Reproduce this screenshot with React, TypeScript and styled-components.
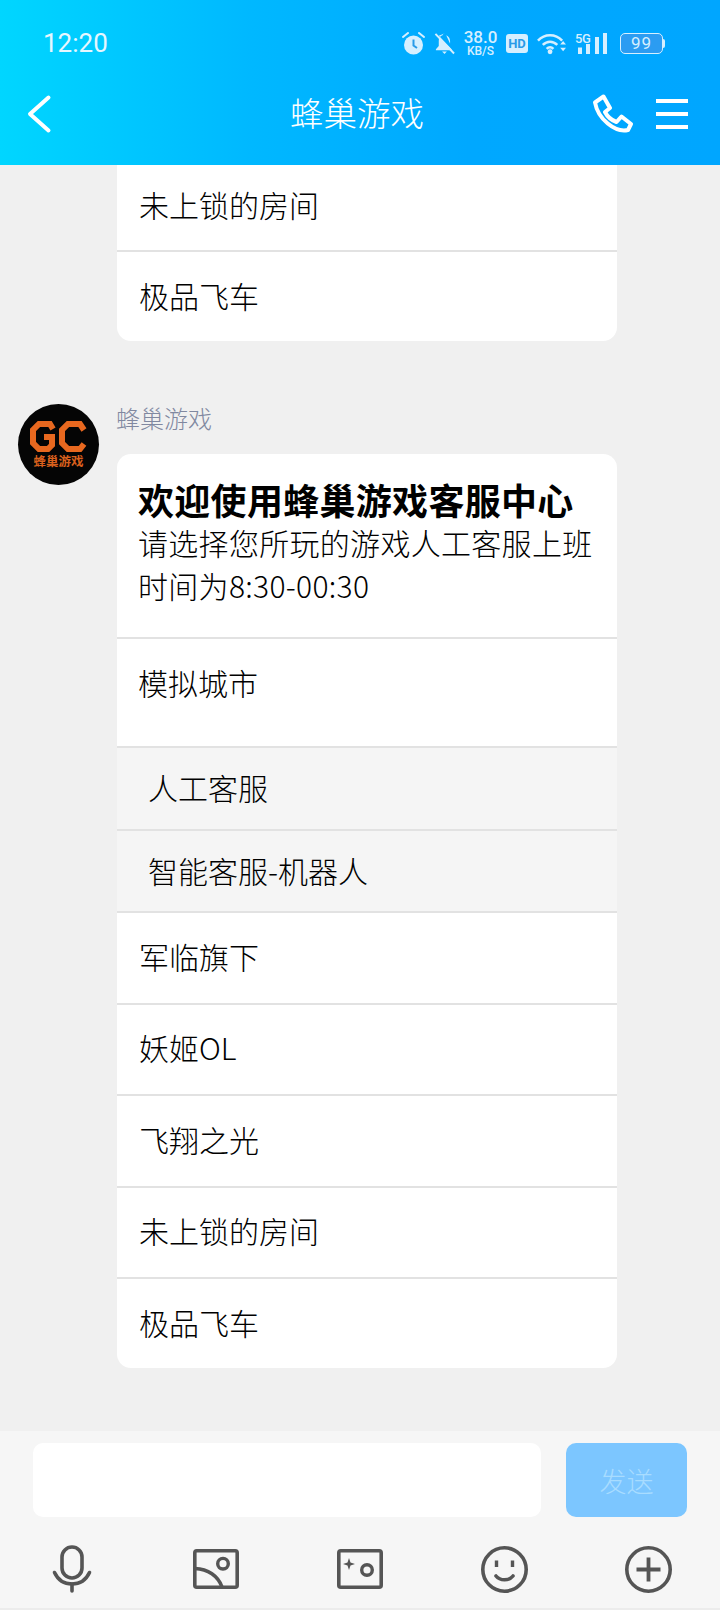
import React from 'react';
import styled, { createGlobalStyle } from 'styled-components';

const CJK = `'Noto Sans CJK SC', 'Noto Sans', sans-serif`;

const GlobalStyle = createGlobalStyle`
  html, body {
    margin: 0;
    padding: 0;
    background: #f0f0f0;
  }
  * {
    box-sizing: border-box;
  }
`;

function AlarmIcon() {
  return (
    <StatusSvg width="23" height="23" viewBox="0 0 23 23">
      <circle cx="11.5" cy="13" r="9.5" fill="#d6efff" />
      <path d="M11.5 7.5v6l3.5 2.5" fill="none" stroke="#2a9be8" strokeWidth="2" />
      <path d="M1 5l5-4M22 5l-5-4" stroke="#d6efff" strokeWidth="2" strokeLinecap="round" />
    </StatusSvg>
  );
}

function BellOffIcon() {
  return (
    <StatusSvg width="21" height="23" viewBox="0 0 22 23">
      <path d="M11 1c-1 0-1.700.7-1.700 1.700C6 3.700 5 6.300 5 9v5l-3 3.500v1h17l-1-1.500L5 3.500z" fill="#d6efff" />
      <path d="M16.800 11.500V9c0-3-1.500-5-4-6.200z" fill="#d6efff" />
      <path d="M8.500 20h5l-2.500 2.500z" fill="#d6efff" />
      <path d="M1.500 1.500L21 22" stroke="#d6efff" strokeWidth="2" />
    </StatusSvg>
  );
}

function WifiIcon() {
  return (
    <StatusSvg width="29" height="23" viewBox="0 0 30 23">
      <path d="M1 8.500C8 1 19 1 26 8.500" fill="none" stroke="#d6efff" strokeWidth="2.600" />
      <path d="M6 13c4.500-4.500 10.500-4.500 15 0" fill="none" stroke="#d6efff" strokeWidth="2.600" />
      <path d="M10 17c2-2 5-2 7 0" fill="none" stroke="#d6efff" strokeWidth="2.600" />
      <circle cx="13.500" cy="20" r="2.500" fill="#d6efff" />
      <path d="M24 12.500h6l-3-3.500zM24 16h6l-3 3.500z" fill="#d6efff" />
    </StatusSvg>
  );
}

function SignalIcon() {
  return (
    <SignalWrap>
      <SignalLabel>5G</SignalLabel>
      <svg width="33" height="21" viewBox="0 0 33 21">
        <rect x="3" y="14.500" width="4" height="6.500" fill="#d6efff" />
        <rect x="11" y="11" width="4" height="10" fill="#d6efff" />
        <rect x="20" y="4" width="4" height="17" fill="#d6efff" />
        <rect x="28" y="0" width="4" height="21" fill="#d6efff" />
      </svg>
    </SignalWrap>
  );
}

function PhoneIcon() {
  return (
    <svg width="41" height="40" viewBox="0 0 41 40">
      <path
        d="M3 8.500L11.500 2.500l6.500 11.500-5 4C15 22 19 26 24.500 28l5-5.500 9.500 7.500-3 6C23 39 6 25 3 8.500z"
        fill="none"
        stroke="#fff"
        strokeWidth="4"
        strokeLinejoin="round"
      />
    </svg>
  );
}

function Avatar() {
  return (
    <AvatarWrap>
      <svg width="57" height="33" viewBox="0 0 57 33">
        <path d="M23 9l-3-5H9L3 10v13l6 6h9l4-4v-8h-8" fill="none" stroke="#e8681f" strokeWidth="6" />
        <path d="M54 10l-4-6H38l-6 6v13l6 6h12l4-5" fill="none" stroke="#e8681f" strokeWidth="6" />
      </svg>
      <AvatarText>蜂巢游戏</AvatarText>
    </AvatarWrap>
  );
}

function MicIcon() {
  return (
    <svg width="40" height="48" viewBox="0 0 40 48">
      <rect x="10" y="2" width="20" height="31" rx="10" fill="none" stroke="#555" strokeWidth="3.600" />
      <path d="M2.500 27.500C6 35 12 39 20 39s14-4 17.500-11.500" fill="none" stroke="#555" strokeWidth="3.600" strokeLinecap="round" />
      <path d="M20 39v7" stroke="#555" strokeWidth="3.600" strokeLinecap="round" />
    </svg>
  );
}

function ImageIcon() {
  return (
    <svg width="46" height="40" viewBox="0 0 46 40">
      <rect x="1.800" y="1.800" width="42.400" height="36.400" rx="2" fill="none" stroke="#555" strokeWidth="3.600" />
      <circle cx="30" cy="14.700" r="5.300" fill="none" stroke="#555" strokeWidth="3.400" />
      <path d="M2 19.500C15 20 25 27 29 38" fill="none" stroke="#555" strokeWidth="3.600" />
    </svg>
  );
}

function CameraIcon() {
  return (
    <svg width="46" height="40" viewBox="0 0 46 40">
      <rect x="1.800" y="1.800" width="42.400" height="36.400" rx="2" fill="none" stroke="#555" strokeWidth="3.600" />
      <circle cx="30" cy="21" r="5.300" fill="none" stroke="#555" strokeWidth="3.400" />
      <path d="M12 9l1.500 4.500 4.500 1.500-4.500 1.500L12 21l-1.500-4.500L6 15l4.500-1.500z" fill="#555" />
    </svg>
  );
}

function SmileIcon() {
  return (
    <svg width="47" height="47" viewBox="0 0 47 47">
      <circle cx="23.500" cy="23.500" r="21.700" fill="none" stroke="#555" strokeWidth="3.600" />
      <path d="M15.500 14.500V21M31.500 14.500V21" stroke="#555" strokeWidth="3.400" />
      <path d="M15 30c4 5 13 5 17 0" fill="none" stroke="#555" strokeWidth="3.600" strokeLinecap="round" />
    </svg>
  );
}

function PlusIcon() {
  return (
    <svg width="47" height="47" viewBox="0 0 47 47">
      <circle cx="23.500" cy="23.500" r="21.700" fill="none" stroke="#555" strokeWidth="3.600" />
      <path d="M23.500 11.500v24M11.500 23.500h24" stroke="#555" strokeWidth="3.800" />
    </svg>
  );
}

const games = ['军临旗下', '妖姬OL', '飞翔之光', '未上锁的房间', '极品飞车'];

function App() {
  return (
    <Page>
      <GlobalStyle />
      <Header>
        <StatusBar>
          <Clock>12:20</Clock>
          <StatusIcons>
            <AlarmIcon />
            <BellOffIcon />
            <Speed>
              <SpeedValue>38.0</SpeedValue>
              <SpeedUnit>KB/S</SpeedUnit>
            </Speed>
            <HdBadge>HD</HdBadge>
            <WifiIcon />
            <SignalIcon />
            <Battery>
              <BatteryBody>99</BatteryBody>
              <BatteryCap />
            </Battery>
          </StatusIcons>
        </StatusBar>
        <NavBar>
          <BackIcon width="26" height="42" viewBox="0 0 26 42">
            <path d="M22.500 4.500L4 21l18.500 16.500" fill="none" stroke="#fff" strokeWidth="4" strokeLinecap="round" strokeLinejoin="round" />
          </BackIcon>
          <NavTitle>蜂巢游戏</NavTitle>
          <NavActions>
            <PhoneIcon />
            <MenuLines>
              <span />
              <span />
              <span />
            </MenuLines>
          </NavActions>
        </NavBar>
      </Header>

      <Chat>
        <TopCard>
          <FirstRow>未上锁的房间</FirstRow>
          <MenuRow>极品飞车</MenuRow>
        </TopCard>
        <Message>
          <Avatar />
          <MessageBody>
            <SenderName>蜂巢游戏</SenderName>
            <Card>
              <Intro>
                <IntroTitle>欢迎使用蜂巢游戏客服中心</IntroTitle>
                <IntroText>请选择您所玩的游戏人工客服上班时间为8:30-00:30</IntroText>
              </Intro>
              <GroupRow>模拟城市</GroupRow>
              <SubRow>人工客服</SubRow>
              <SubRow>智能客服-机器人</SubRow>
              {games.map((name) => (
                <MenuRow key={name}>{name}</MenuRow>
              ))}
            </Card>
          </MessageBody>
        </Message>
      </Chat>

      <Composer>
        <InputRow>
          <Input />
          <SendBtn>发送</SendBtn>
        </InputRow>
        <Tools>
          <MicIcon />
          <ImageIcon />
          <CameraIcon />
          <SmileIcon />
          <PlusIcon />
        </Tools>
      </Composer>
    </Page>
  );
}

const Page = styled.div`
  width: 720px;
  height: 1610px;
  display: flex;
  flex-direction: column;
  overflow: hidden;
  background: #f0f0f0;
  font-family: ${CJK};
`;
const Header = styled.header`
  height: 165px;
  flex-shrink: 0;
  color: #fff;
  background: linear-gradient(90deg, #00d6ff 0%, #00b8ff 35%, #00a8ff 65%, #00a6ff 100%);
`;
const StatusBar = styled.div`
  height: 86px;
  padding: 0 55px 0 43px;
  display: flex;
  align-items: center;
  justify-content: space-between;
`;
const Clock = styled.div`
  font-family: Roboto, sans-serif;
  font-size: 26px;
  color: #e6f7ff;
`;
const StatusIcons = styled.div`
  display: flex;
  align-items: center;
  gap: 9px;
`;
const StatusSvg = styled.svg`
  display: block;
`;
const Speed = styled.div`
  width: 33px;
  display: flex;
  flex-direction: column;
  align-items: center;
  font-family: Roboto, sans-serif;
  font-weight: 500;
  color: #d6efff;
  white-space: nowrap;
`;
const SpeedValue = styled.div`
  font-size: 17px;
  line-height: 16px;
`;
const SpeedUnit = styled.div`
  font-size: 12px;
  line-height: 12px;
`;
const HdBadge = styled.div`
  width: 22px;
  height: 19px;
  border-radius: 3px;
  background: #d6efff;
  color: #2a9be8;
  font-family: Roboto, sans-serif;
  font-size: 13px;
  font-weight: 700;
  line-height: 19px;
  text-align: center;
`;
const SignalWrap = styled.div`
  position: relative;
  display: flex;
`;
const SignalLabel = styled.span`
  position: absolute;
  left: 0;
  top: 0;
  font-family: Roboto, sans-serif;
  font-size: 13px;
  font-weight: 500;
  letter-spacing: -0.5px;
  line-height: 11px;
  color: #d6efff;
`;
const Battery = styled.div`
  margin-left: 3px;
  display: flex;
  align-items: center;
`;
const BatteryBody = styled.div`
  width: 43px;
  height: 21px;
  border: 1px solid #d6efff;
  border-radius: 5px;
  background: #2b9cf2;
  color: #d6efff;
  font-family: Roboto, sans-serif;
  font-size: 17px;
  line-height: 19px;
  letter-spacing: 1px;
  text-align: center;
`;
const BatteryCap = styled.div`
  width: 2px;
  height: 9px;
  background: #d6efff;
  border-radius: 0 2px 2px 0;
`;
const NavBar = styled.div`
  height: 56px;
  padding: 0 32px 0 26px;
  display: grid;
  grid-template-columns: 1fr auto 1fr;
  align-items: center;
`;
const BackIcon = styled.svg`
  display: block;
`;
const NavTitle = styled.div`
  padding-bottom: 4px;
  font-size: 33.5px;
  line-height: 44px;
  font-weight: 300;
`;
const NavActions = styled.div`
  display: flex;
  align-items: center;
  justify-content: flex-end;
  gap: 23px;
`;
const MenuLines = styled.div`
  width: 32px;
  display: flex;
  flex-direction: column;
  gap: 9px;
  span {
    height: 4px;
    background: #fff;
  }
`;
const Chat = styled.main`
  flex: 1;
  min-height: 0;
  padding-left: 18px;
`;
const TopCard = styled.div`
  width: 500px;
  margin-left: 99px;
  border-radius: 0 0 14px 14px;
  background: #fff;
  overflow: hidden;
`;
const Message = styled.div`
  margin-top: 63px;
  display: flex;
  gap: 18px;
`;
const AvatarWrap = styled.div`
  width: 81px;
  height: 81px;
  flex-shrink: 0;
  border-radius: 50%;
  background: #050505;
  display: flex;
  flex-direction: column;
  align-items: center;
  padding-top: 16px;
  svg {
    display: block;
  }
`;
const AvatarText = styled.div`
  margin-top: 1px;
  font-size: 12.5px;
  line-height: 14px;
  font-weight: 700;
  color: #d9601d;
  white-space: nowrap;
`;
const MessageBody = styled.div`
  width: 500px;
`;
const SenderName = styled.div`
  height: 50px;
  margin-left: -1px;
  font-size: 24px;
  line-height: 27px;
  font-weight: 300;
  color: #8088a0;
`;
const Card = styled.div`
  border-radius: 14px;
  background: #fff;
  overflow: hidden;
`;
const Intro = styled.div`
  height: 183px;
  padding: 29px 21px 0;
`;
const IntroTitle = styled.div`
  font-family: 'Liberation Sans', ${CJK};
  font-size: 36px;
  line-height: 40px;
  font-weight: 700;
  letter-spacing: 0.3px;
  color: #000;
  white-space: nowrap;
`;
const IntroText = styled.div`
  margin-top: -2px;
  font-size: 30px;
  line-height: 43px;
  font-weight: 300;
  letter-spacing: 0.3px;
  color: #000;
`;
const MenuRow = styled.div`
  height: 91.4px;
  padding: 0 22px 4px;
  display: flex;
  align-items: center;
  border-top: 2px solid #e2e2e2;
  font-size: 30px;
  font-weight: 300;
  color: #000;
`;
const FirstRow = styled(MenuRow)`
  height: 85px;
  padding-bottom: 8px;
  border-top: none;
`;
const GroupRow = styled.div`
  height: 109px;
  padding: 22px 21px 0;
  border-top: 2px solid #e2e2e2;
  font-size: 30px;
  font-weight: 300;
  line-height: 43px;
  color: #000;
`;
const SubRow = styled.div`
  height: 82.5px;
  padding: 0 31px 3px;
  display: flex;
  align-items: center;
  border-top: 2px solid #e2e2e2;
  background: #f5f5f5;
  font-size: 30px;
  font-weight: 300;
  color: #000;
`;
const Composer = styled.footer`
  height: 179px;
  flex-shrink: 0;
  padding: 12px 33px 0;
  background: #f6f6f6;
  border-bottom: 2px solid #ececec;
`;
const InputRow = styled.div`
  display: flex;
  justify-content: space-between;
`;
const Input = styled.div`
  width: 508px;
  height: 74px;
  border-radius: 10px;
  background: #fff;
`;
const SendBtn = styled.div`
  width: 121px;
  height: 74px;
  border-radius: 10px;
  background: #7cc6ff;
  color: #a8dcff;
  display: flex;
  align-items: center;
  justify-content: center;
  font-size: 27px;
  font-weight: 300;
`;
const Tools = styled.div`
  margin: 28px -33px 0;
  display: grid;
  grid-template-columns: repeat(5, 144px);
  justify-items: center;
  align-items: center;
  height: 48px;
  svg {
    display: block;
  }
`;

export default App;
